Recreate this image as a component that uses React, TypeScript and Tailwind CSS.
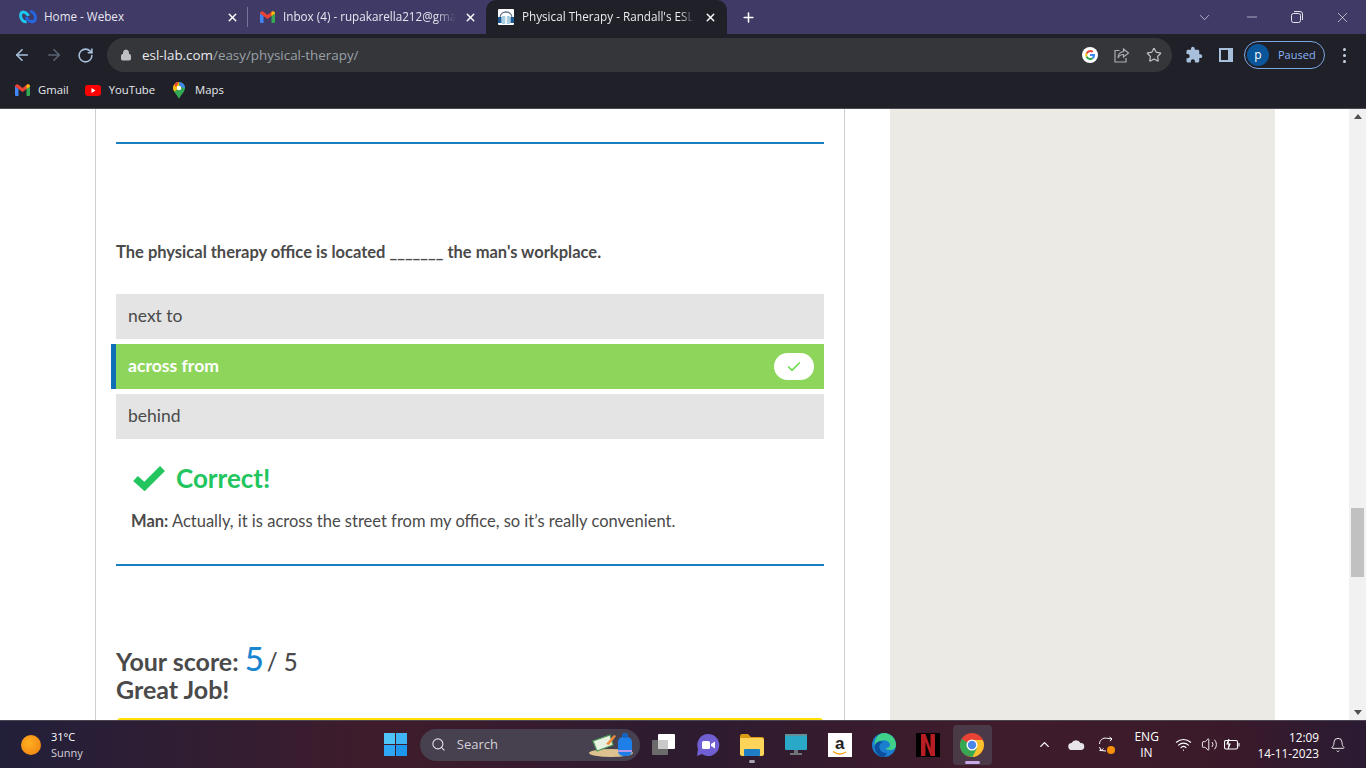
import { ChevronDown, ChevronUp, Search, X, Plus, ArrowLeft, ArrowRight, RotateCw, Lock, Star, Minus, Wifi, Volume2, Bell, Check } from "lucide-react";

const FONT = "font-['Lato','Open_Sans','Liberation_Sans',sans-serif]";
const UI = "font-['Open_Sans','Noto_Sans',sans-serif]";

function GmailIcon() {
  return (
    <svg width="15" height="12" viewBox="0 0 15 12">
      <path d="M0 2v9a1 1 0 0 0 1 1h2.500V5L0 2z" fill="#4285f4" />
      <path d="M15 2v9a1 1 0 0 1-1 1h-2.500V5L15 2z" fill="#34a853" />
      <path d="M0 2.500C0 .6 2 -.5 3.500 .8L7.500 4l4-3.200C13 -.5 15 .6 15 2.500L11.500 5 7.500 8 3.500 5 0 2.500z" fill="#ea4335" />
      <path d="M11.500 1v4l3.500-2.500C15 .6 13 -.5 11.500 1z" fill="#fbbc04" />
    </svg>
  );
}

function WebexIcon() {
  return (
    <svg width="18" height="14" viewBox="0 0 18 14" fill="none">
      <path d="M9.500 6C7.500 1.500 2.500 .8 1.700 4.500c-.7 4 2.800 8.300 5.800 7" stroke="#1fc5ee" strokeWidth="3" />
      <path d="M7 7c2 5 8 6 9.200 2.500C17.200 6 14.500 .8 11 2" stroke="#2566e0" strokeWidth="3" />
    </svg>
  );
}

function FaviconHeadset() {
  return (
    <svg width="16" height="16" viewBox="0 0 16 16">
      <rect width="16" height="16" fill="#ffffff" rx="1" />
      <path d="M2 9C2 1 14 1 14 9" stroke="#64748b" strokeWidth="1.300" fill="none" />
      <rect x="4" y="7" width="8" height="8" fill="#a9cfe0" />
      <rect x="7" y="7" width="2" height="8" fill="#e8f3f8" />
      <rect x="0" y="8" width="3.500" height="6" fill="#1d5a94" />
      <rect x="12.500" y="8" width="3.500" height="6" fill="#1d5a94" />
    </svg>
  );
}

function MapsPin() {
  return (
    <svg width="12" height="17" viewBox="0 0 12 17">
      <path d="M6 17C4.500 13 0 10 0 6a6 6 0 0 1 12 0c0 4-4.500 7-6 11z" fill="#34a853" />
      <path d="M1.200 2.400A6 6 0 0 1 6 0v6L1.500 9.500C.5 8.200 0 7.200 0 6c0-1.400.4-2.600 1.200-3.600z" fill="#fbbc04" />
      <path d="M1.200 2.400A6 6 0 0 1 6 0L3 5z" fill="#ea4335" />
      <path d="M6 0a6 6 0 0 1 6 6L8 5z" fill="#4285f4" />
      <circle cx="6" cy="6" r="2.200" fill="#ffffff" />
    </svg>
  );
}

function GoogleG() {
  return (
    <svg width="16" height="16" viewBox="0 0 16 16">
      <circle cx="8" cy="8" r="8" fill="#ffffff" />
      <path d="M3.700 5.900A5 5 0 0 1 11.400 4.300L10 5.700A3 3 0 0 0 5.400 7z" fill="#ea4335" />
      <path d="M3.700 5.900 5.400 7a3 3 0 0 0 0 2L3.700 10.200a5 5 0 0 1 0-4.300z" fill="#fbbc04" />
      <path d="M3.700 10.200 5.400 9a3 3 0 0 0 4.500 1.500l1.600 1.300A5 5 0 0 1 3.700 10.200z" fill="#34a853" />
      <path d="M13 7H8v2h2.800c-.2.600-.5 1.100-.9 1.500l1.600 1.300C12.600 10.800 13.300 9 13 7z" fill="#4285f4" />
    </svg>
  );
}

function ChromeIcon() {
  return (
    <svg width="24" height="24" viewBox="0 0 24 24">
      <circle cx="12" cy="12" r="12" fill="#ea4335" />
      <path d="M12 12 1.600 6A12 12 0 0 0 7 23z" fill="#34a853" />
      <path d="M12 7h10.800A12 12 0 0 1 10 23.800L12 12z" fill="#fbc02d" />
      <path d="M7 23l5-11 5 3-4.500 9z" fill="#34a853" />
      <circle cx="12" cy="12" r="5.500" fill="#ffffff" />
      <circle cx="12" cy="12" r="4.200" fill="#4a86e8" />
    </svg>
  );
}

function EdgeIcon() {
  return (
    <svg width="24" height="24" viewBox="0 0 24 24">
      <circle cx="12" cy="12" r="12" fill="#1b7fd0" />
      <path d="M12 0a12 12 0 0 1 12 12c0 3-2.500 5-6 5-3 0-4-1-4-2 3 0 4-1.500 4-3 0-3-4-5.500-8-4.500C6 8.500 3 11 2.800 13 1.500 7 6 0 12 0z" fill="#3fd08a" />
      <path d="M2.800 13C3.500 9 8 7 11 9c-3 1-4 3-3.500 6 .5 3 3.500 5 7.500 5-1 1.500-2.500 4-3 4C6 24 2.500 18 2.800 13z" fill="#0c4f9e" />
    </svg>
  );
}

function FolderIcon() {
  return (
    <svg width="24" height="22" viewBox="0 0 24 22">
      <path d="M0 2a2 2 0 0 1 2-2h6l3 3h11a2 2 0 0 1 0 4H0z" fill="#d99b14" />
      <path d="M0 4h22a2 2 0 0 1 2 2v14a2 2 0 0 1-2 2H2a2 2 0 0 1-2-2z" fill="#fcd45a" />
      <rect x="4" y="15" width="16" height="7" rx="1" fill="#1f7fc4" />
    </svg>
  );
}

function Bookmark({ icon, label }: { icon: React.ReactNode; label: string }) {
  return (
    <div className="flex items-center gap-[8px] text-[11.300px] text-[#e8eaed]">
      {icon}
      <span>{label}</span>
    </div>
  );
}

function Chrome() {
  return (
    <div className={`${UI} shrink-0`}>
      <div className="flex h-[34px] items-center bg-[#3f3a66]">
        <div className="flex h-[34px] w-[247px] items-center pl-[19px] pr-[8px]">
          <span className="flex w-[25px] shrink-0 items-center"><WebexIcon /></span>
          <span className="whitespace-nowrap text-[11.700px] text-[#e8e6f0]">Home - Webex</span>
          <X className="ml-auto text-white" size={13} strokeWidth={2.500} />
        </div>
        <div className="h-[20px] w-px bg-[#77739a]" />
        <div className="flex h-[34px] w-[238px] items-center pl-[12px] pr-[9px]">
          <span className="flex w-[23px] shrink-0"><GmailIcon /></span>
          <span className="whitespace-nowrap text-[11.700px] text-[#e8e6f0] [mask-image:linear-gradient(to_right,black_88%,transparent)]">Inbox (4) - rupakarella212@gma</span>
          <X className="ml-auto text-white" size={13} strokeWidth={2.500} />
        </div>
        <div className="flex h-[34px] w-[241px] items-center rounded-t-[10px] bg-[#1f2028] pl-[12px] pr-[10px]">
          <span className="flex w-[24px] shrink-0"><FaviconHeadset /></span>
          <span className="whitespace-nowrap text-[11.700px] text-[#e8eaed] [mask-image:linear-gradient(to_right,black_92%,transparent)]">Physical Therapy - Randall's ESL</span>
          <X className="ml-auto text-white" size={13} strokeWidth={2.500} />
        </div>
        <Plus className="ml-[14px] text-white" size={15} strokeWidth={2.500} />
        <div className="ml-auto flex items-center gap-[31px] pr-[15px] text-[#e6e4ee]">
          <ChevronDown size={17} strokeWidth={1} />
          <Minus size={16} strokeWidth={1} />
          <svg width="12" height="12" viewBox="0 0 12 12" fill="none" stroke="currentColor" strokeWidth="1">
            <rect x=".5" y="2.500" width="9" height="9" rx="2" />
            <path d="M3 .5h6a2.500 2.500 0 0 1 2.500 2.500v6" />
          </svg>
          <X size={17} strokeWidth={1} />
        </div>
      </div>
      <div className="flex h-[41px] items-center bg-[#1f2028] pt-[1px]">
        <div className="flex items-center gap-[14px] pl-[13px]">
          <ArrowLeft size={18} className="text-[#a8c0dc]" strokeWidth={2.200} />
          <ArrowRight size={18} className="text-[#5a6472]" strokeWidth={2.200} />
          <RotateCw size={17} className="text-[#a8c0dc]" strokeWidth={2.200} />
        </div>
        <div className="ml-[13px] flex h-[34px] w-[1065px] items-center rounded-full bg-[#35363a] pl-[13px] pr-[10px] text-[13.400px]">
          <Lock size={12} className="mr-[10px] text-[#bcbfc4]" fill="#bcbfc4" />
          <span className="text-[#e8eaed]">esl-lab.com</span>
          <span className="text-[#9aa0a6]">/easy/physical-therapy/</span>
          <div className="ml-auto flex items-center gap-[16px]">
            <GoogleG />
            <svg width="16" height="15" viewBox="0 0 16 15" fill="none" stroke="#a9adb3" strokeWidth="1.200">
              <path d="M5.500 2.500H1v11.500h11v-4" />
              <path d="M9.500 1l5 4-5 4V6.500C7 6.500 5 7.500 4 10c0-3.500 2-6 5.500-6.500z" />
            </svg>
            <Star size={16} className="text-[#bcbfc4]" strokeWidth={1.800} />
          </div>
        </div>
        <div className="ml-[13px] flex items-center">
          <svg width="18" height="18" viewBox="0 0 24 24" fill="#a8c0dc">
            <path d="M20.500 11H19V7c0-1.100-.9-2-2-2h-4V3.500C13 2.120 11.880 1 10.500 1S8 2.120 8 3.500V5H4c-1.100 0-1.990.9-1.990 2v3.800H3.500c1.490 0 2.700 1.210 2.700 2.700s-1.210 2.700-2.700 2.700H2V20c0 1.100.9 2 2 2h3.800v-1.500c0-1.490 1.210-2.700 2.700-2.700 1.490 0 2.700 1.210 2.700 2.700V22H17c1.100 0 2-.9 2-2v-4h1.500c1.380 0 2.500-1.120 2.500-2.500S21.880 11 20.500 11z" />
          </svg>
          <svg className="ml-[16px]" width="14" height="14" viewBox="0 0 14 14">
            <rect width="14" height="14" fill="#a8c0dc" />
            <rect x="2" y="2" width="7" height="10" fill="#1f2028" />
          </svg>
          <div className="ml-[11px] flex h-[28px] w-[81px] items-center rounded-full border border-[#7ca6e0] pl-[2px]">
            <span className="flex h-[22px] w-[22px] items-center justify-center rounded-full bg-[#0b559b] text-[12px] text-white">p</span>
            <span className="ml-[9px] text-[11px] text-[#8ab4f8]">Paused</span>
          </div>
          <div className="ml-[18px] flex flex-col gap-[3px]">
            <span className="h-[3px] w-[3px] rounded-full bg-[#c6d2e2]" />
            <span className="h-[3px] w-[3px] rounded-full bg-[#c6d2e2]" />
            <span className="h-[3px] w-[3px] rounded-full bg-[#c6d2e2]" />
          </div>
        </div>
      </div>
      <div className="flex h-[34px] items-center gap-[16px] border-b border-[#4a4b52] bg-[#1f2028] pl-[15px] pb-[3px]">
        <Bookmark icon={<GmailIcon />} label="Gmail" />
        <Bookmark
          icon={
            <svg width="16" height="11" viewBox="0 0 16 11">
              <rect width="16" height="11" rx="3" fill="#ff0000" />
              <path d="M6.500 3v5l4-2.500z" fill="#ffffff" />
            </svg>
          }
          label="YouTube"
        />
        <div className="ml-[2px]"><Bookmark icon={<div className="mr-[2px]"><MapsPin /></div>} label="Maps" /></div>
      </div>
    </div>
  );
}

function Option({ label }: { label: string }) {
  return <div className="flex h-[45px] items-center bg-[#e4e4e4] pl-[12px] text-[17.500px] text-[#4a4a4a]">{label}</div>;
}

function Page() {
  return (
    <div className={`${FONT} flex min-h-0 flex-1 overflow-hidden bg-white`}>
      <div className="ml-[95px] flex w-[750px] shrink-0 flex-col border-x border-[#cfcfcf] pl-[20px] pr-[20px]">
        <div className="mt-[33px] h-[2px] shrink-0 bg-[#1a7fc1]" />
        <p className="mt-[98px] text-[16.500px] font-bold leading-[20px] text-[#4a4a4a]">The physical therapy office is located _______ the man's workplace.</p>
        <div className="mt-[32px] flex flex-col gap-[5px]">
          <Option label="next to" />
          <div className="-ml-[5px] flex h-[45px] items-center border-l-[5px] border-[#0f6fb5] bg-[#8dd55b] pl-[12px] pr-[10px] text-[17.600px] font-bold text-white">
            <span>across from</span>
            <span className="ml-auto flex h-[27px] w-[40px] items-center justify-center rounded-full bg-white">
              <Check size={16} className="text-[#6fdc50]" strokeWidth={2.500} />
            </span>
          </div>
          <Option label="behind" />
        </div>
        <div className="mt-[19px] flex items-center pl-[16px]">
          <svg width="34" height="26" viewBox="0 0 34 26">
            <path d="M3.500 13.500 12.500 21.500 30.500 3.500" fill="none" stroke="#22c55e" strokeWidth="7" />
          </svg>
          <span className="ml-[10px] text-[26px] font-bold leading-[40px] text-[#22c55e]">Correct!</span>
        </div>
        <p className="mt-[13px] pl-[15px] text-[16.500px] leading-[20px] text-[#4a4a4a]"><b>Man:</b> Actually, it is across the street from my office, so it’s really convenient.</p>
        <div className="mt-[33px] h-[2px] shrink-0 bg-[#1a7fc1]" />
        <div className="mt-[78px] flex items-baseline text-[25px] font-bold leading-[28px] text-[#4a4a4a]">
          Your score:
          <span className="ml-[6px] text-[33px] font-medium text-[#1a86d0]">5</span>
          <span className="ml-[3px] text-[24px] font-medium">/ 5</span>
        </div>
        <div className="-mt-[1px] text-[25px] font-bold leading-[28px] text-[#4a4a4a]">Great Job!</div>
        <div className="mt-[15px] h-[10px] shrink-0 rounded-t-[5px] bg-[#ffe000]" />
      </div>
      <div className="ml-[45px] w-[385px] shrink-0 bg-[#ebeae5]" />
      <div className="flex-1" />
      <div className="flex w-[17px] shrink-0 flex-col items-center bg-[#f1f1f1]">
        <div className="mt-[5px] h-0 w-0 border-x-[4px] border-b-[5px] border-x-transparent border-b-[#505050]" />
        <div className="mt-[389px] h-[69px] w-[13px] shrink-0 bg-[#c1c1c1]" />
        <div className="mt-auto mb-[5px] h-0 w-0 border-x-[4px] border-t-[5px] border-x-transparent border-t-[#505050]" />
      </div>
    </div>
  );
}

function Taskbar() {
  return (
    <div className={`${UI} flex h-[48px] shrink-0 items-center border-t border-[#4a4550] bg-[linear-gradient(90deg,#221f3a_0%,#3f1c2b_28%,#2d1b30_50%,#3f1c2b_72%,#3a1a2a_90%,#2a1b33_100%)] text-white`}>
      <div className="flex items-center pl-[21px]">
        <span className="h-[20px] w-[20px] rounded-full bg-[radial-gradient(circle_at_40%_40%,#ffb020,#f07d10)]" />
        <div className="ml-[10px] text-[11px] leading-[16px]">
          <div>31°C</div>
          <div className="text-[#d5d2da]">Sunny</div>
        </div>
      </div>
      <div className="ml-[301px] grid h-[23px] w-[23px] grid-cols-2 gap-[1px]">
        <span className="bg-[#4fc4f7]" />
        <span className="bg-[#3eb4f5]" />
        <span className="bg-[#2ea6f3]" />
        <span className="bg-[#1d96ee]" />
      </div>
      <div className="ml-[13px] flex h-[32px] w-[220px] items-center rounded-full bg-[#46404f] pl-[11px] text-[13px] text-[#d5d2da]">
        <Search size={15} className="text-[#e0dee4]" strokeWidth={1.800} />
        <span className="ml-[11px]">Search</span>
        <svg className="ml-auto mr-[6px]" width="46" height="25" viewBox="0 0 46 25">
          <ellipse cx="23" cy="21" rx="22" ry="4" fill="#dcc38f" />
          <path d="M5 9 22 3l3 10-16 6z" fill="#e8f0e0" stroke="#4c9a55" strokeWidth="1.200" />
          <path d="M18 12 26 3l2 1-7 9z" fill="#ef8f3d" />
          <rect x="30" y="5" width="14" height="19" rx="5" fill="#1f7fe8" />
          <rect x="34" y="1" width="6" height="5" rx="2" fill="#1565c0" />
          <rect x="30" y="18" width="14" height="2" fill="#b79be8" />
        </svg>
      </div>
      <div className="ml-[12px] flex items-center">
        <svg width="24" height="22" viewBox="0 0 24 22">
          <rect x="0" y="6" width="16" height="15" rx="1" fill="#6a6a6a" />
          <rect x="6" y="0" width="17" height="15" rx="1" fill="#ffffff" />
          <rect x="6" y="6" width="10" height="9" fill="#c9c9c9" />
        </svg>
        <svg className="ml-[20px]" width="24" height="24" viewBox="0 0 24 24">
          <path d="M12 1a11 11 0 1 1-6 20l-5 2 1-7A11 11 0 0 1 12 1z" fill="#6f5fd3" />
          <rect x="6" y="8" width="8" height="8" rx="1.500" fill="#ffffff" />
          <path d="M15 11l4-2.500v7L15 13z" fill="#ffffff" />
        </svg>
        <div className="relative ml-[20px]">
          <FolderIcon />
          <span className="absolute -bottom-[7px] left-[9px] h-[3px] w-[6px] rounded-full bg-[#a8a4ac]" />
        </div>
        <svg className="ml-[21px]" width="22" height="21" viewBox="0 0 22 21">
          <rect width="22" height="16" rx="1" fill="#2aa8c8" />
          <rect width="22" height="2" fill="#5f8f9a" />
          <rect x="9" y="16" width="4" height="3" fill="#6f7478" />
          <rect x="5" y="19" width="12" height="2" fill="#6f7478" />
        </svg>
        <div className="ml-[21px] flex h-[24px] w-[24px] flex-col items-center justify-center bg-white font-['Liberation_Sans',sans-serif] text-[17px] font-bold leading-[17px] text-[#222222]">
          a
          <svg width="15" height="4" viewBox="0 0 15 4" className="-mt-[1px]">
            <path d="M1 .5C5 3.500 10 3.500 14 1" fill="none" stroke="#f59e0b" strokeWidth="1.300" />
          </svg>
        </div>
        <div className="ml-[20px]"><EdgeIcon /></div>
        <svg className="ml-[20px]" width="24" height="24" viewBox="0 0 24 24">
          <rect width="24" height="24" fill="#000000" />
          <path d="M5 1h4.500l5 14V1H19v22h-4.500l-5-14v14H5z" fill="#b81d24" />
        </svg>
        <div className="relative ml-[13px] flex h-[40px] w-[39px] items-center justify-center rounded-[4px] bg-[#4a3a47]">
          <ChromeIcon />
          <span className="absolute bottom-[1px] left-[12px] h-[3px] w-[15px] rounded-full bg-[#c9a8e8]" />
        </div>
      </div>
      <div className="ml-auto flex items-center pr-[20px] text-[11px]">
        <ChevronUp size={15} strokeWidth={2.200} />
        <svg className="ml-[16px]" width="17" height="11" viewBox="0 0 17 11">
          <path d="M4 11a3.500 3.500 0 0 1-.5-7A5 5 0 0 1 12.500 4 3.500 3.500 0 0 1 13 11z" fill="#e6e4e8" />
        </svg>
        <div className="relative ml-[13px] h-[17px] w-[16px]">
          <svg width="16" height="17" viewBox="0 0 16 17" fill="none" stroke="#ffffff" strokeWidth="1">
            <path d="M1.500 8C1.500 4 5 1.500 8.500 2.200L14 3M14 3l-2.500-2M14 3l-2 2.200" />
            <path d="M1.500 11 3 14.500 8 15M1.500 14.500l1.500 0M3 14.500l2.500-2" />
          </svg>
          <span className="absolute -bottom-[1px] -right-[1px] h-[8px] w-[8px] rounded-full bg-[#f79009]" />
        </div>
        <div className="ml-[20px] w-[24px] text-center text-[12px] leading-[16px]">ENG<br />IN</div>
        <Wifi className="ml-[17px]" size={17} strokeWidth={1.600} />
        <Volume2 className="ml-[9px]" size={17} strokeWidth={1.300} />
        <svg className="ml-[6px]" width="17" height="13" viewBox="0 0 17 13" fill="none" stroke="#ffffff" strokeWidth="1.100">
          <rect x=".5" y="2.500" width="13" height="8.500" rx="1.500" />
          <path d="M15 5v3.500" />
          <path d="M5 1 3 6h3L4 11" fill="#ffffff" />
        </svg>
        <div className="ml-[16px] text-right text-[11.800px] leading-[16px]">
          <div>12:09</div>
          <div>14-11-2023</div>
        </div>
        <Bell className="ml-[11px]" size={16} strokeWidth={1.300} />
      </div>
    </div>
  );
}

export default function App() {
  return (
    <div className="flex h-[768px] w-[1366px] flex-col overflow-hidden">
      <Chrome />
      <Page />
      <Taskbar />
    </div>
  );
}
